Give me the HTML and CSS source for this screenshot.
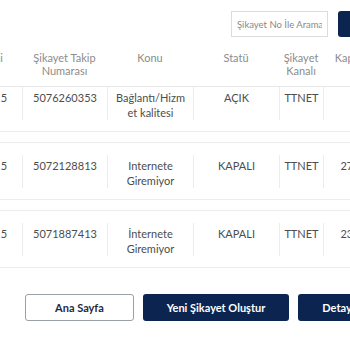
FILE: index.html
```html
<!DOCTYPE html>
<html lang="tr">
<head>
	<meta charset="UTF-8">
	<title>Şikayetlerim</title>
	<link rel="stylesheet" href="styles.css">
</head>
<body>
	<div class="page">
		<div class="toolbar">
			<input class="search" type="text" placeholder="Şikayet No İle Arama">
			<button class="search-btn">Ara</button>
		</div>

		<div class="table">
			<div class="thead">
				<div class="c c1">Şikayet Tarihi</div>
				<div class="c c2">Şikayet Takip Numarası</div>
				<div class="c c3">Konu</div>
				<div class="c c4">Statü</div>
				<div class="c c5">Şikayet Kanalı</div>
				<div class="c c6">Kapanış Tarihi</div>
			</div>
			<div class="row first">
				<div class="c c1">12.03.2015</div>
				<div class="c c2">5076260353</div>
				<div class="c c3">Bağlantı/Hizmet kalitesi</div>
				<div class="c c4">AÇIK</div>
				<div class="c c5">TTNET</div>
				<div class="c c6"></div>
			</div>
			<div class="row">
				<div class="c c1">24.02.2015</div>
				<div class="c c2">5072128813</div>
				<div class="c c3">Internete Giremiyor</div>
				<div class="c c4">KAPALI</div>
				<div class="c c5">TTNET</div>
				<div class="c c6">27.02.2015</div>
			</div>
			<div class="row">
				<div class="c c1">20.02.2015</div>
				<div class="c c2">5071887413</div>
				<div class="c c3">İnternete Giremiyor</div>
				<div class="c c4">KAPALI</div>
				<div class="c c5">TTNET</div>
				<div class="c c6">23.02.2015</div>
			</div>
		</div>

		<div class="actions">
			<button class="btn btn-light">Ana Sayfa</button>
			<button class="btn btn-dark wide">Yeni Şikayet Oluştur</button>
			<button class="btn btn-dark small">Detay</button>
		</div>
	</div>
</body>
</html>
```

FILE: styles.css
```css
*{
	margin: 0;
	padding: 0;
	box-sizing: border-box;
}
html, body{
	overflow: hidden;
}
body{
	background: #fff;
	font-family: "Lato", "Noto Sans", sans-serif;
	color: #4d4d4d;
}
.page{
	width: 529px;
	margin-left: -64px;
}

/* arama */
.toolbar{
	display: flex;
	justify-content: flex-end;
	gap: 10px;
	padding-top: 11px;
	padding-right: 9px;
}
.search{
	width: 97px;
	height: 26px;
	border: 1px solid #dcdcdc;
	padding: 0 5px;
	font-family: inherit;
	font-size: 9.5px;
	color: #555;
	outline: none;
}
.search::placeholder{
	color: #8a8a8a;
}
.search-btn{
	width: 118px;
	height: 26px;
	border: 0;
	border-radius: 3px;
	background: #0b2550;
	color: #fff;
	font-family: inherit;
	font-weight: 700;
	font-size: 11px;
}

/* tablo */
.table{
	margin-top: 14px;
}
.thead, .row{
	display: flex;
}
.c{
	flex: none;
	text-align: center;
}
.c1{ width: 86px; }
.c2{ width: 85px; }
.c3{ width: 86px; }
.c4{ width: 86px; }
.c5{ width: 44px; }
.c6{ width: 90px; }

.thead{
	border-bottom: 1px solid #e8e8e8;
	padding-bottom: 9px;
}
.thead .c{
	font-size: 11px;
	line-height: 13px;
	color: #8c8c8c;
	padding: 0 6px;
}
.thead .c1{
	white-space: nowrap;
	text-align: right;
	padding: 0 19px 0 0;
}
.thead .c5{
	padding: 0 2px;
}

.row{
	border-top: 1px solid #ececec;
	border-bottom: 1px solid #ececec;
	margin-top: 10px;
	padding: 12px 0 11px;
}
.row.first{
	border-top: 0;
	margin-top: 0;
	padding-top: 0;
}
.row .c{
	font-size: 11px;
	line-height: 15px;
	min-height: 33px;
	padding: 3px 10px 0;
	border-left: 1px solid #ececec;
	overflow-wrap: anywhere;
}
.row .c1{
	border-left: 0;
}
.row .c3{
	padding: 3px 6px 0;
}
.row .c5{
	padding: 3px 2px 0;
}

/* butonlar */
.actions{
	display: flex;
	justify-content: center;
	gap: 9px;
	margin-top: 26px;
}
.btn{
	width: 109px;
	height: 27px;
	border-radius: 3px;
	font-family: inherit;
	font-size: 11px;
	font-weight: 700;
	cursor: pointer;
}
.btn.wide{
	width: 146px;
}
.btn.small{
	width: 78px;
}
.btn-light{
	background: #fff;
	border: 1px solid #9aa0a8;
	color: #1e2a45;
}
.btn-dark{
	background: #0b2550;
	border: 0;
	color: #fff;
}
```
